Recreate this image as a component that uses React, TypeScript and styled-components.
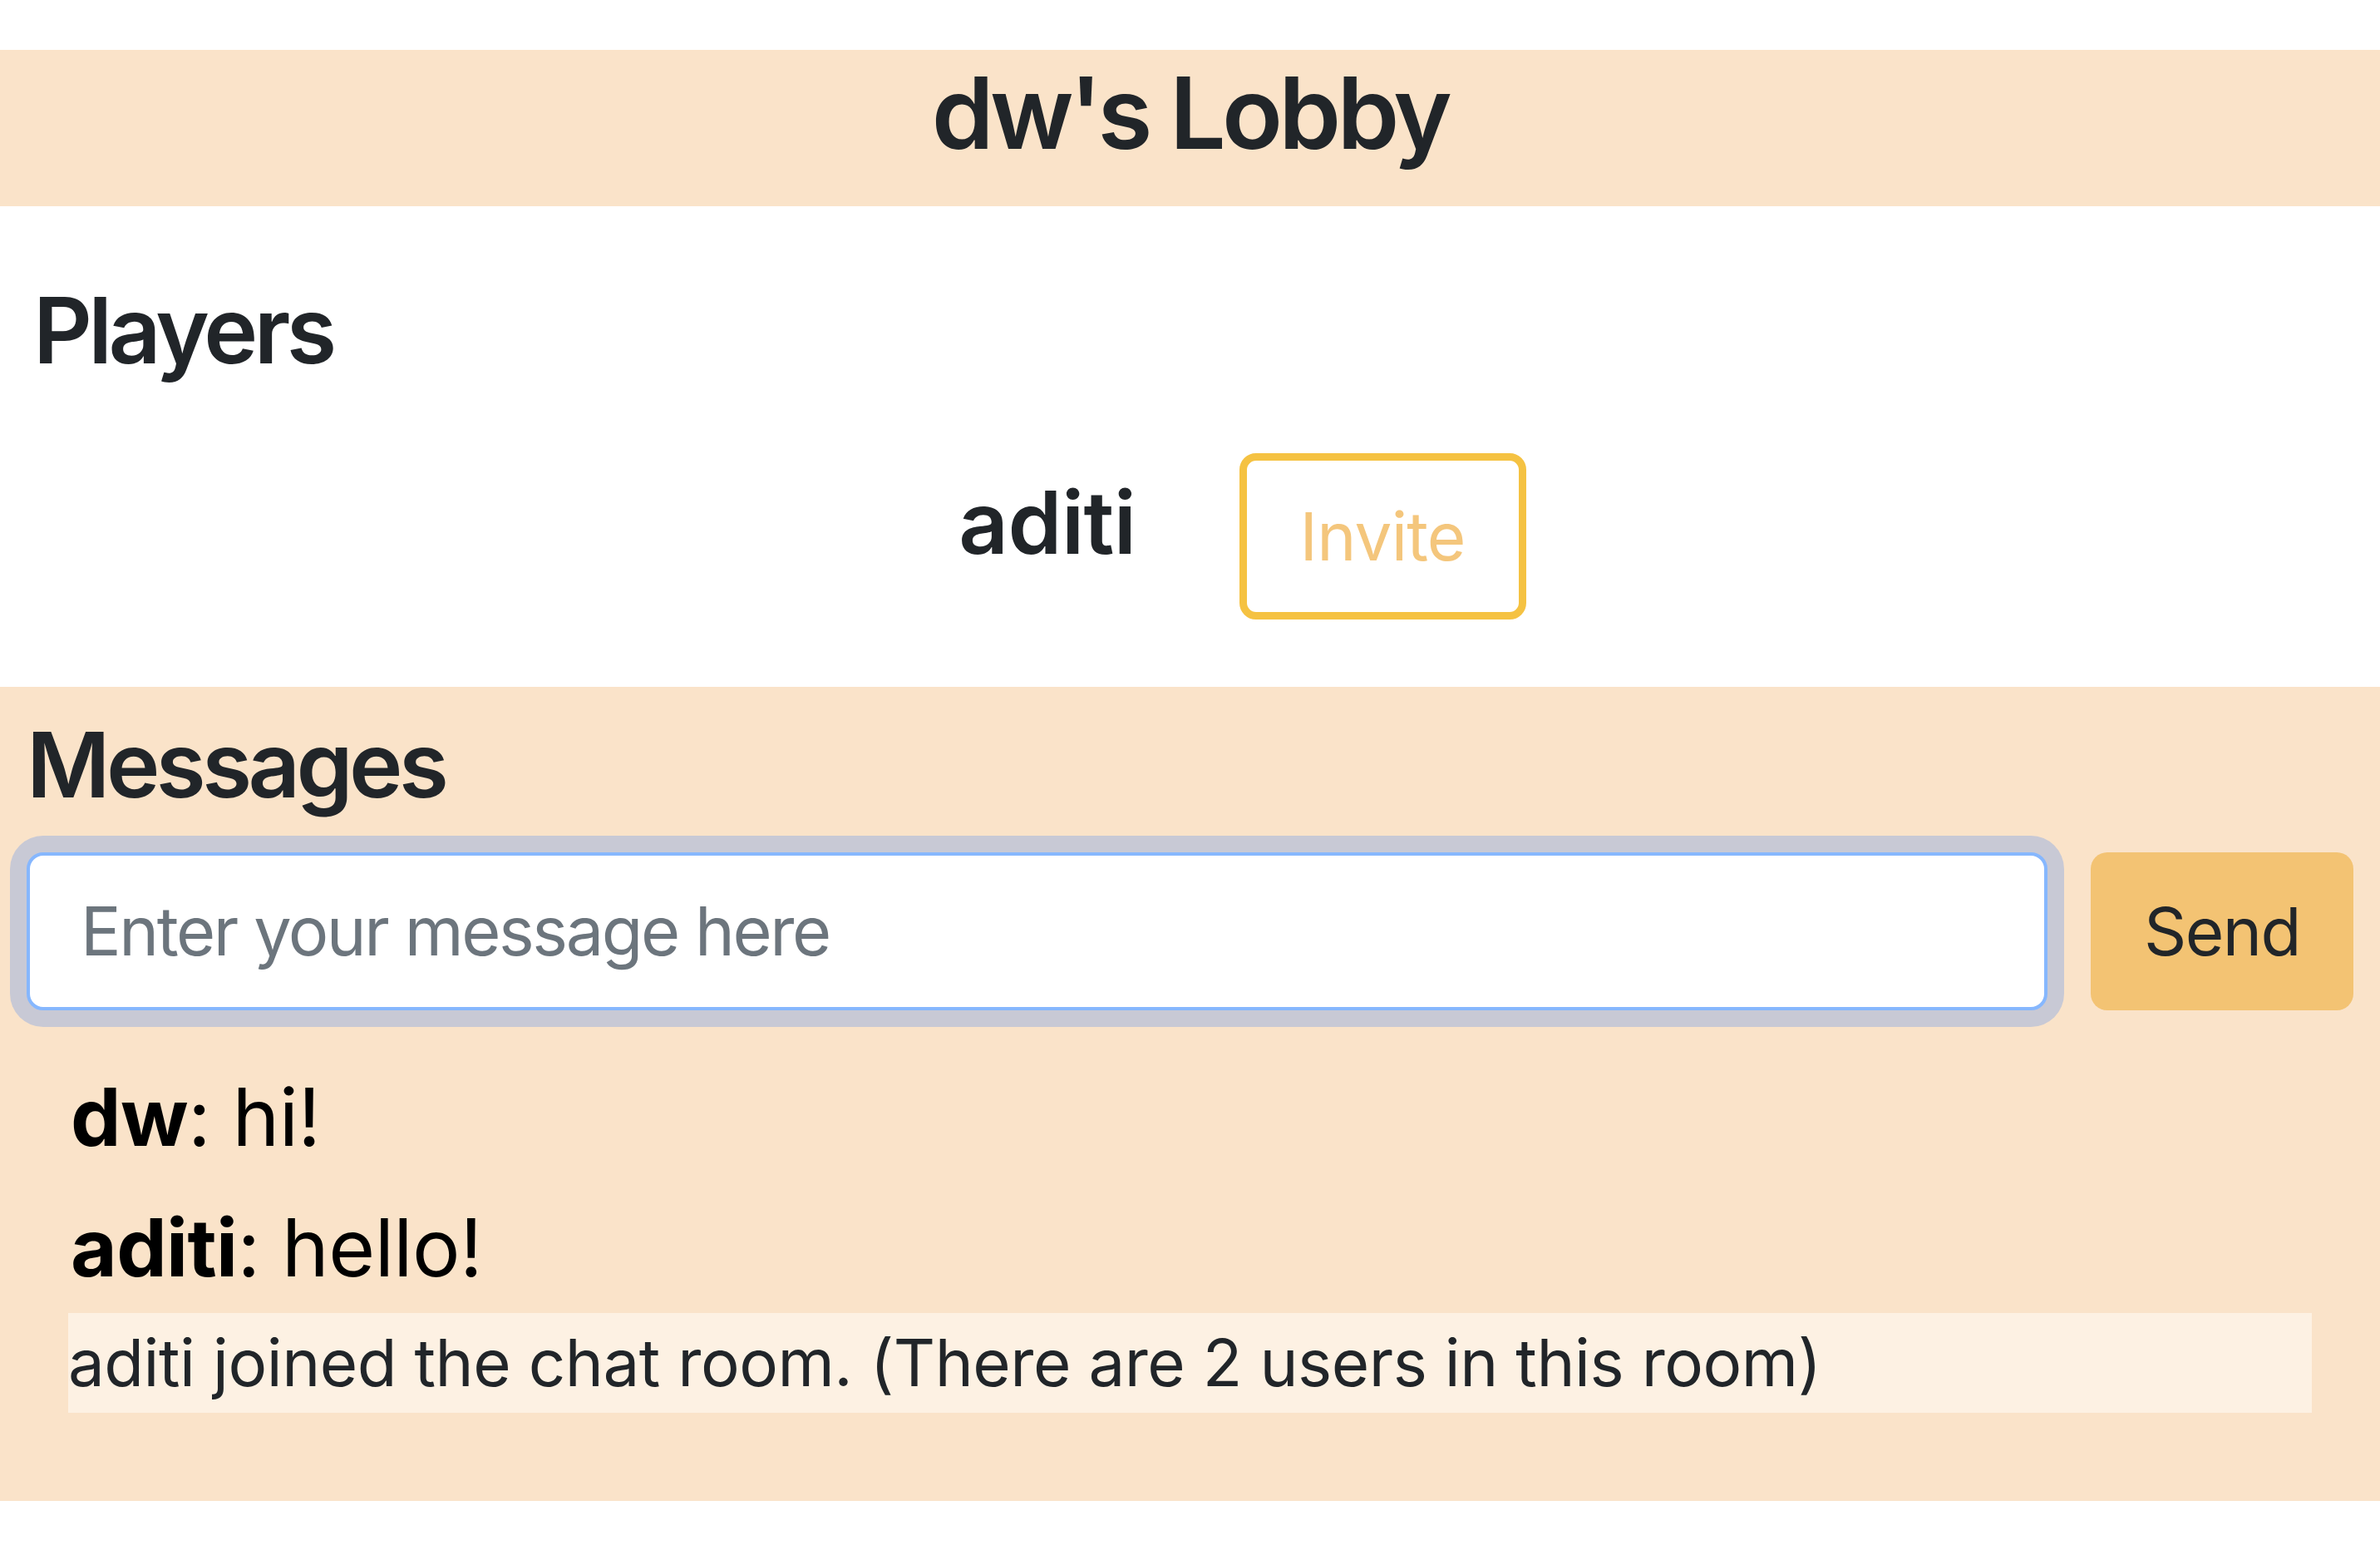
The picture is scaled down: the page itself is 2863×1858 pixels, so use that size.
import React from "react";
import styled, { createGlobalStyle } from "styled-components";

const GlobalStyle = createGlobalStyle`
  html, body {
    margin: 0;
    padding: 0;
    background: #ffffff;
  }
  body {
    font-family: Inter, "Liberation Sans", Arial, sans-serif;
    color: #212529;
  }
  * { box-sizing: border-box; }
`;

const PEACH = "#fae3c9";

const Page = styled.div`
  padding-top: 60px;
`;

const Header = styled.header`
  background: ${PEACH};
  padding: 4px 0 40px;
  text-align: center;
`;

const Title = styled.h1`
  margin: 0;
  font-size: 120px;
  font-weight: 600;
  line-height: 1.2;
  letter-spacing: -0.04em;
  color: #212529;
`;

const PlayersSection = styled.section`
  padding: 83px 40px 81px;
`;

const SectionTitle = styled.h2<{ $size: number }>`
  margin: 0;
  font-size: ${(p) => p.$size}px;
  font-weight: 600;
  line-height: 1.2;
  letter-spacing: -0.042em;
  color: #212529;
`;

const PlayerRow = styled.div`
  margin-top: 82px;
  display: flex;
  align-items: center;
  justify-content: center;
  gap: 124px;
  padding-left: 126px;
`;

const PlayerName = styled.span`
  font-size: 104px;
  font-weight: 600;
  line-height: 1.2;
  letter-spacing: -0.005em;
  padding-bottom: 34px;
  color: #212529;
`;

const InviteButton = styled.button`
  font-family: inherit;
  font-size: 80px;
  line-height: 1.5;
  letter-spacing: -0.01em;
  padding: 31px 64px;
  background: #ffffff;
  color: #f4c67c;
  border: 9px solid #f5c242;
  border-radius: 20px;
  cursor: pointer;
`;

const MessagesSection = styled.section`
  background: ${PEACH};
  padding: 28px 32px 106px;
`;

const InputRow = styled.div`
  margin-top: 40px;
  display: flex;
  align-items: stretch;
  gap: 52px;
  height: 190px;
`;

const MessageInput = styled.input`
  flex: 1;
  min-width: 0;
  font-family: inherit;
  font-size: 81px;
  letter-spacing: -0.03em;
  padding: 0 61px;
  color: #212529;
  background: #ffffff;
  border: 4px solid #86b7fe;
  border-radius: 20px;
  box-shadow: 0 0 0 20px #c8c9d5;
  outline: none;
  caret-color: #212529;
  &::placeholder {
    color: #6c757d;
    opacity: 1;
  }
`;

const SendButton = styled.button`
  width: 316px;
  font-family: inherit;
  font-size: 80px;
  letter-spacing: -0.02em;
  color: #212529;
  background: #f3c373;
  border: none;
  border-radius: 20px;
  cursor: pointer;
`;

const ChatList = styled.div`
  margin: 50px 50px 0;
  display: flex;
  flex-direction: column;
`;

const ChatLine = styled.div`
  font-size: 96px;
  line-height: 157px;
  letter-spacing: -0.006em;
  color: #000000;
  padding-left: 3px;
  white-space: nowrap;
`;

const Author = styled.strong`
  font-weight: 700;
`;

const SystemLine = styled.div`
  background: #fdf1e3;
  font-size: 78px;
  line-height: 120px;
  letter-spacing: -0.006em;
  color: #212529;
  white-space: nowrap;
`;

type Msg = { author?: string; text: string };

const messages: Msg[] = [
  { author: "dw", text: "hi!" },
  { author: "aditi", text: "hello!" },
  { text: "aditi joined the chat room. (There are 2 users in this room)" },
];

export default function App() {
  return (
    <Page>
      <GlobalStyle />
      <Header>
        <Title>dw's Lobby</Title>
      </Header>
      <PlayersSection>
        <SectionTitle $size={110}>Players</SectionTitle>
        <PlayerRow>
          <PlayerName>aditi</PlayerName>
          <InviteButton>Invite</InviteButton>
        </PlayerRow>
      </PlayersSection>
      <MessagesSection>
        <SectionTitle $size={109}>Messages</SectionTitle>
        <InputRow>
          <MessageInput placeholder="Enter your message here" autoFocus />
          <SendButton>Send</SendButton>
        </InputRow>
        <ChatList>
          {messages.map((m, i) =>
            m.author ? (
              <ChatLine key={i}>
                <Author>{m.author}</Author>: {m.text}
              </ChatLine>
            ) : (
              <SystemLine key={i}>{m.text}</SystemLine>
            )
          )}
        </ChatList>
      </MessagesSection>
    </Page>
  );
}
